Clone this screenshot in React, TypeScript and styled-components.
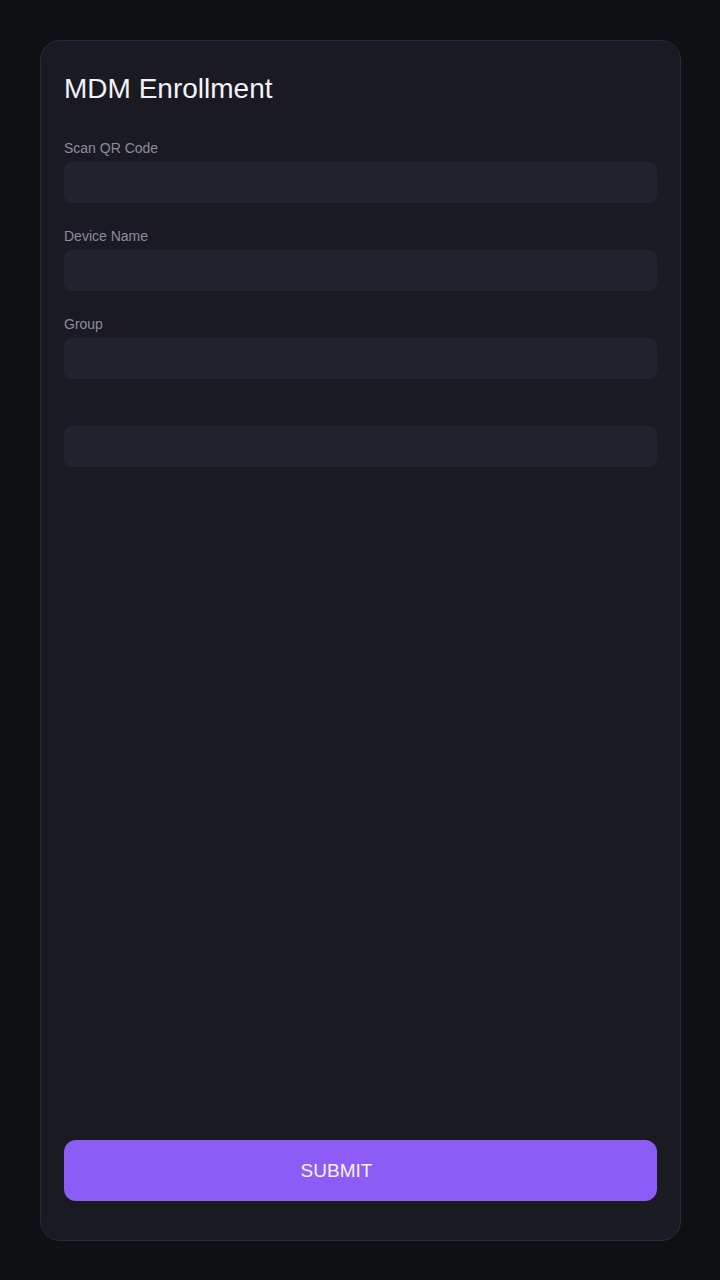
import React from "react";
import styled, { createGlobalStyle } from "styled-components";

const GlobalStyle = createGlobalStyle`
  html, body {
    margin: 0;
    padding: 0;
    background: #0f1014;
  }
  body {
    font-family: "Liberation Sans", Arial, sans-serif;
  }
  * { box-sizing: border-box; }
`;

const Page = styled.div`
  min-height: 100vh;
  padding: 40px;
  background: #0f1014;
`;

const Card = styled.form`
  width: 641px;
  height: 1201px;
  background: #1a1a23;
  border: 1px solid #2b2b38;
  border-radius: 20px;
  padding: 32px 23px 39px 23px;
  display: flex;
  flex-direction: column;
`;

const Title = styled.h1`
  margin: 0 0 35px 0;
  font-size: 28px;
  line-height: 32px;
  font-weight: 400;
  color: #f2f2f7;
`;

const Fields = styled.div`
  display: flex;
  flex-direction: column;
  gap: 25px;
`;

const Field = styled.label`
  display: flex;
  flex-direction: column;
`;

const LabelText = styled.span`
  display: block;
  height: 16px;
  font-size: 14px;
  line-height: 16px;
  color: #8d8d9c;
  margin-bottom: 6px;
`;

const Input = styled.input`
  display: block;
  width: 100%;
  height: 41px;
  border: none;
  outline: none;
  border-radius: 8px;
  background: #232330;
  color: #e8e8f0;
  font-family: inherit;
  font-size: 15px;
  padding: 0 12px;
`;

const Spacer = styled.div`
  flex: 1;
`;

const SubmitButton = styled.button`
  width: 100%;
  height: 61px;
  border: none;
  border-radius: 12px;
  background: #8b5cf6;
  color: #f5f3ff;
  font-family: inherit;
  font-size: 19px;
  display: flex;
  align-items: center;
  justify-content: center;
  padding: 0 48px 0 0;
  cursor: pointer;
`;

const fields = ["Scan QR Code", "Device Name", "Group", ""];

export default function App() {
  return (
    <>
      <GlobalStyle />
      <Page>
        <Card onSubmit={(e) => e.preventDefault()}>
          <Title>MDM Enrollment</Title>
          <Fields>
            {fields.map((f, i) => (
              <Field key={i}>
                <LabelText>{f}</LabelText>
                <Input type="text" />
              </Field>
            ))}
          </Fields>
          <Spacer />
          <SubmitButton type="submit">SUBMIT</SubmitButton>
        </Card>
      </Page>
    </>
  );
}
